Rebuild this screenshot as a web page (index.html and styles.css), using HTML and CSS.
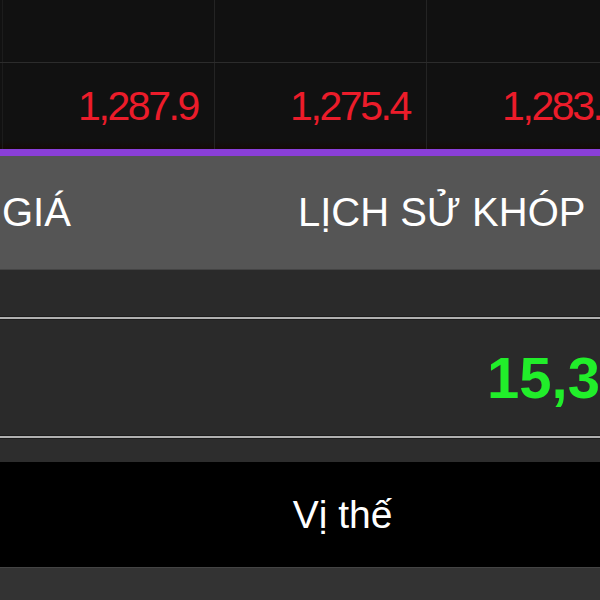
FILE: index.html
```html
<!DOCTYPE html>
<html lang="vi">
<head>
    <meta charset="UTF-8">
    <meta name="viewport" content="width=device-width, initial-scale=1.0">
    <title>Bảng giá phái sinh</title>
    <link rel="stylesheet" href="styles.css">
</head>
<body>
    <div class="board">
        <div class="board-row head-row">
            <div class="cell edge"></div>
            <div class="cell"></div>
            <div class="cell"></div>
            <div class="cell"></div>
        </div>
        <div class="board-row price-row">
            <div class="cell edge"></div>
            <div class="cell down">1,287.9</div>
            <div class="cell down">1,275.4</div>
            <div class="cell down">1,283.7</div>
        </div>
    </div>

    <div class="tabs">
        <span class="tab tab-price">GIÁ</span>
        <span class="tab tab-history">LỊCH SỬ KHÓP</span>
    </div>

    <div class="spacer"></div>
    <div class="rule"></div>
    <div class="summary">
        <span class="volume">15,342</span>
    </div>
    <div class="rule"></div>
    <div class="spacer small"></div>

    <div class="position-bar">
        <span>Vị thế</span>
    </div>
    <div class="footer"></div>
</body>
</html>
```

FILE: styles.css
```css
body, html {
    margin: 0;
    padding: 0;
    width: 100%;
    height: 100%;
    overflow: hidden;
    background-color: #333;
    font-family: 'Liberation Sans', Arial, sans-serif;
}

.board {
    background-color: #111;
}

.board-row {
    display: grid;
    grid-template-columns: 3px 212px 212px 212px;
}

.head-row {
    height: 62px;
    border-bottom: 1px solid #2c2c2c;
}

.price-row {
    height: 86px;
    background: linear-gradient(#111 0, #111 90%, #150b06 100%);
}

.cell {
    border-right: 1px solid #242424;
    display: flex;
    align-items: center;
    justify-content: flex-end;
    padding-right: 16px;
    white-space: nowrap;
}

    .cell.edge {
        padding-right: 0;
        border-right-color: #1c1c1c;
    }

    .cell.down {
        color: #ec1c2a;
        font-size: 41px;
        letter-spacing: -2.4px;
    }

.tabs {
    height: 113px;
    border-top: 7px solid #8a3fd8;
    background-color: #555;
    display: flex;
    align-items: center;
    color: #fff;
    font-size: 40px;
    white-space: nowrap;
}

.tab-price {
    margin-left: 2px;
}

.tab-history {
    margin-left: 227px;
}

.spacer {
    height: 46px;
    background-color: #2a2a2a;
    border-top: 1px solid #444;
}

    .spacer.small {
        height: 23px;
        background-color: #2d2d2d;
        border-top: none;
    }

.rule {
    height: 2px;
    background-color: #b0b0b0;
    border-top: 1px solid #1c1c1c;
    border-bottom: 1px solid #1c1c1c;
}

.summary {
    height: 115px;
    background-color: #2a2a2a;
    display: flex;
    align-items: center;
    padding-left: 487px;
    white-space: nowrap;
}

.volume {
    color: #21ee2a;
    font-size: 58px;
    font-weight: bold;
}

.position-bar {
    height: 105px;
    background-color: #000;
    display: flex;
    align-items: center;
    justify-content: center;
    padding-left: 85px;
    color: #fff;
    font-size: 39px;
}

.footer {
    height: 40px;
    background-color: #333;
    border-top: 1px solid #444;
}
```
